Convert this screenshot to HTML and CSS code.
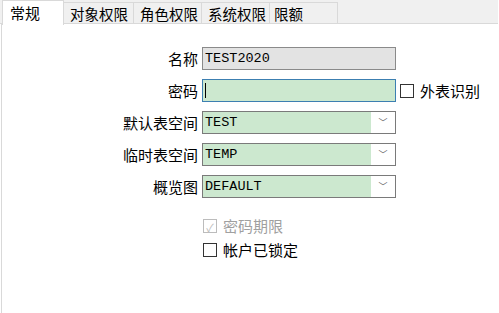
FILE: index.html
```html
<html>

<head>
  <meta charset="utf-8">
  <link rel="stylesheet" href="styles.css">
</head>

<body>
  <div class="tabs">
    <div class="tab active">常规</div>
    <div class="tab">对象权限</div>
    <div class="tab">角色权限</div>
    <div class="tab">系统权限</div>
    <div class="tab short">限额</div>
  </div>

  <div class="panel">
    <div class="form">
      <label>名称</label>
      <div class="field readonly">TEST2020</div>
      <div></div>

      <label>密码</label>
      <div class="field focus"><span class="caret"></span></div>
      <div class="check"><span class="box"></span>外表识别</div>

      <label>默认表空间</label>
      <div class="field combo"><span class="value">TEST</span><span class="arrow">﹀</span></div>
      <div></div>

      <label>临时表空间</label>
      <div class="field combo"><span class="value">TEMP</span><span class="arrow">﹀</span></div>
      <div></div>

      <label>概览图</label>
      <div class="field combo"><span class="value">DEFAULT</span><span class="arrow">﹀</span></div>
      <div></div>
    </div>

    <div class="options">
      <div class="check disabled"><span class="box">✓</span>密码期限</div>
      <div class="check"><span class="box"></span>帐户已锁定</div>
    </div>
  </div>
</body>

</html>
```

FILE: styles.css
```css
body {
  margin: 0;
  width: 499px;
  height: 313px;
  overflow: hidden;
  background-color: white;
  font-family: "Noto Sans CJK SC", "Noto Sans", sans-serif;
  font-size: 15px;
  color: #000;
}

.tabs {
  display: flex;
  height: 23px;
  background-color: #f0f0f0;
  border-bottom: 1px solid #d9d9d9;
  margin-right: 1px;
  padding-left: 2px;
}

.tab {
  width: 68px;
  height: 21px;
  margin-top: 2px;
  padding-left: 6px;
  line-height: 21px;
  font-size: 14.5px;
  border: 1px solid #d9d9d9;
  border-bottom: none;
  border-left: none;
  background-color: #f0f0f0;
  box-sizing: border-box;
  white-space: nowrap;
}

.tab.short {
  padding-left: 4px;
}

.tab.active {
  width: 62px;
  height: 25px;
  margin-top: 0;
  padding-left: 7px;
  line-height: 24px;
  font-size: 15px;
  background-color: white;
  border-left: 1px solid #d9d9d9;
}

.tab.active + .tab {
  width: 70px;
}

.panel {
  height: 289px;
  border-left: 1px solid #d9d9d9;
  margin-left: 1px;
}

.form {
  display: grid;
  grid-template-columns: 196px 194px auto;
  grid-auto-rows: 23px;
  row-gap: 9px;
  column-gap: 4px;
  padding-top: 23px;
  align-items: center;
}

.form label {
  text-align: right;
  line-height: 23px;
}

.field {
  height: 21px;
  border: 1px solid #8a8a8a;
  background-color: #cce8cf;
  font-family: "Liberation Mono", monospace;
  font-size: 13.5px;
  line-height: 21px;
  padding-left: 2px;
  display: flex;
  align-items: center;
}

.readonly {
  background-color: #e3e3e3;
}

.focus {
  border-color: #3c7fb1;
}

.caret {
  width: 1px;
  height: 15px;
  background-color: #000;
}

.combo {
  padding-left: 0;
  background-color: white;
  border-color: #7a7a7a;
}

.combo .value {
  flex: 1;
  height: 21px;
  padding-left: 2px;
  background-color: #cce8cf;
}

.combo .arrow {
  width: 24px;
  text-align: center;
  font-family: "Noto Sans CJK SC", sans-serif;
  font-size: 9px;
  color: #606060;
}

.check {
  display: flex;
  align-items: center;
  gap: 6px;
  line-height: 18px;
}

.box {
  width: 14px;
  height: 14px;
  border: 1px solid #333;
  background-color: white;
  font-size: 11px;
  line-height: 14px;
  text-align: center;
  box-sizing: border-box;
}

.options {
  display: flex;
  flex-direction: column;
  gap: 6px;
  padding-left: 201px;
  padding-top: 19px;
}

.check.disabled {
  color: #a0a0a0;
}

.check.disabled .box {
  border-color: #bcbcbc;
  color: #bcbcbc;
}
```
